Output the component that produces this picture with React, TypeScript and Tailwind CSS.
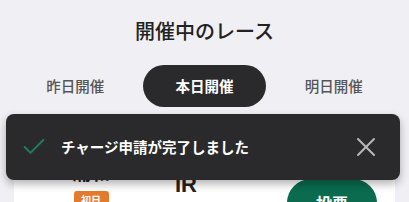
import { Check, X } from "lucide-react";

const tabs = ["昨日開催", "本日開催", "明日開催"];

export default function App() {
  const active = 1;

  return (
    <div
      className="relative h-[202px] w-[409px] overflow-hidden bg-[#f0eff4]"
      style={{ fontFamily: '"Noto Sans CJK JP", "Noto Sans", sans-serif' }}
    >
      <h1 className="pt-[17px] text-center text-[20px] leading-[28px] font-medium text-[#222]">
        開催中のレース
      </h1>

      <div className="mt-[20px] grid grid-cols-3 gap-[7px] px-[14px]">
        {tabs.map((tab, i) => (
          <button
            key={tab}
            className={
              i === active
                ? "flex h-[42px] items-center justify-center rounded-full bg-[#2a2a2c] text-[14.5px] font-bold text-white"
                : "flex h-[42px] items-center justify-center rounded-full text-[14.5px] font-medium text-[#555]"
            }
          >
            {tab}
          </button>
        ))}
      </div>

      {/* race card under the toast */}
      <div className="mx-[14px] mt-[12px] flex h-[120px] items-start bg-white pt-[41px] pl-[36px] pr-[18px]">
        <div className="flex w-[82px] flex-col items-center">
          <span className="text-[19px] leading-[24px] font-bold text-[#222]">浦和</span>
          <span className="mt-[7px] flex h-[16px] w-[35px] items-center justify-center rounded-[3px] bg-[#e47b2c] text-[10px] font-bold text-white">
            初日
          </span>
        </div>
        <span
          className="ml-[43px] mt-[12px] text-[22px] leading-[26px] font-bold text-[#222]"
          style={{ fontFamily: '"Liberation Sans", sans-serif' }}
        >
          IR
        </span>
        <button className="ml-auto mt-[19px] flex h-[48px] w-[90px] items-center justify-center rounded-full bg-[#0b6b4f] text-[16px] font-bold text-white">
          投票
        </button>
      </div>

      {/* toast */}
      <div className="absolute left-[6px] top-[114px] flex h-[66px] w-[394px] items-center rounded-[8px] bg-[#2a2a2c] pl-[14px] pr-[18px] shadow-[0_4px_8px_rgba(0,0,0,0.3)]">
        <Check size={28} strokeWidth={1.7} className="shrink-0 text-[#1f7d5e]" />
        <span className="ml-[13px] text-[14.5px] font-bold text-white">
          チャージ申請が完了しました
        </span>
        <X size={32} strokeWidth={1.5} className="ml-auto shrink-0 text-[#b8b8b8]" />
      </div>
    </div>
  );
}
